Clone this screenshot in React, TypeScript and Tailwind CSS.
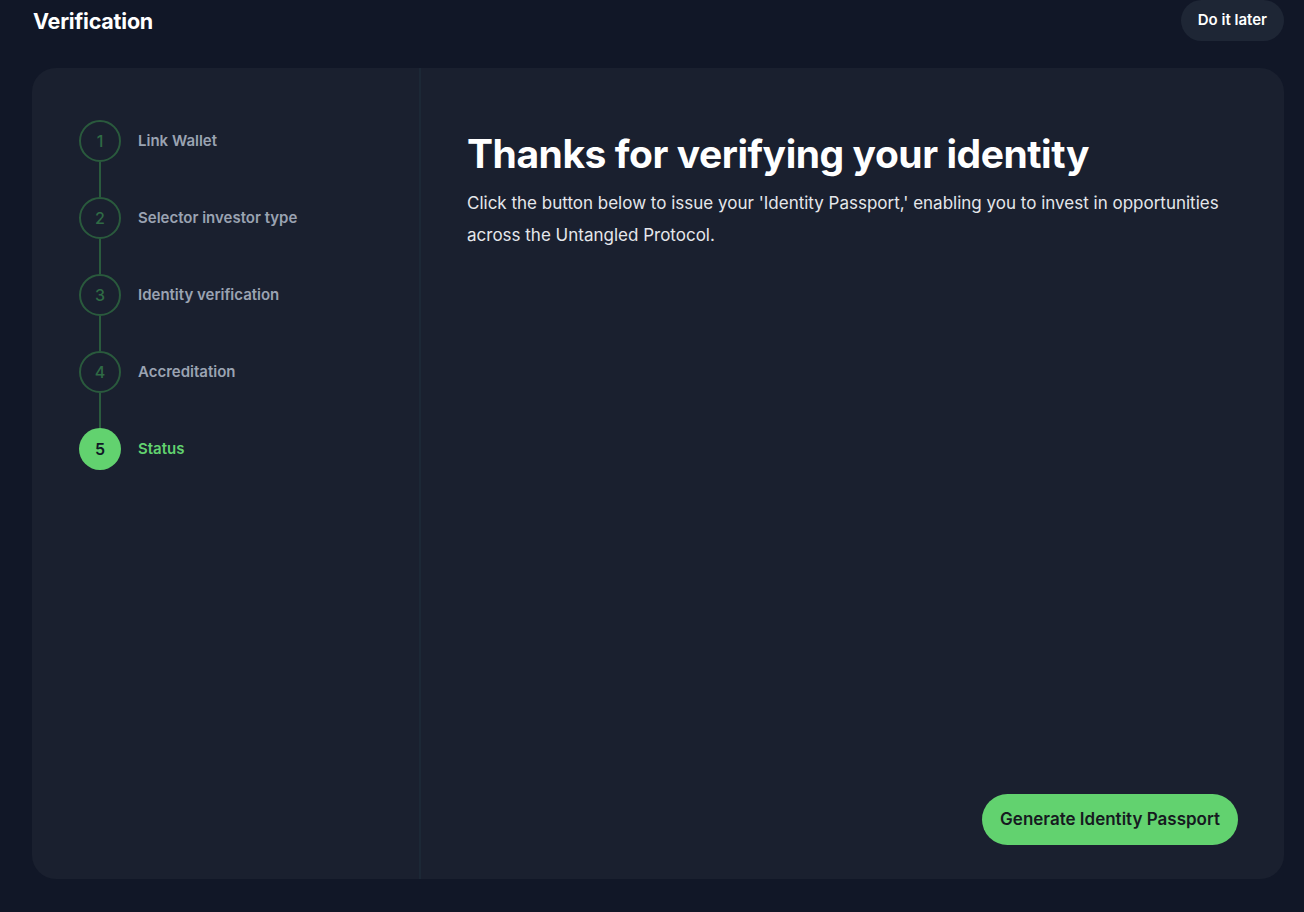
import React from 'react';

interface Step {
  id: number;
  label: string;
}

const steps: Step[] = [
  { id: 1, label: 'Link Wallet' },
  { id: 2, label: 'Selector investor type' },
  { id: 3, label: 'Identity verification' },
  { id: 4, label: 'Accreditation' },
  { id: 5, label: 'Status' },
];

const activeStep = 5;

const App: React.FC = () => {
  return (
    <div
      className="min-h-[912px] bg-[#111727] pl-8 pr-5 pb-[33px]"
      style={{ fontFamily: 'Inter, "Noto Sans", sans-serif' }}
    >
      {/* Header */}
      <div className="flex items-center justify-between h-[43px]">
        <h1 className="text-[21.5px] font-bold text-white tracking-[-0.2px] ml-[1px]">Verification</h1>
        <button className="h-[41px] px-[17px] rounded-full bg-[#1e2635] text-white text-[15px] font-semibold -mt-[2px]">
          Do it later
        </button>
      </div>

      {/* Card */}
      <div className="mt-[25px] h-[811px] flex rounded-[24px] bg-[#1a202f] overflow-hidden">
        {/* Stepper */}
        <div className="w-[389px] border-r-[2px] border-[#1c2836] pl-[47px] pt-[52px]">
          {steps.map((step, i) => {
            const isActive = step.id === activeStep;
            return (
              <div key={step.id}>
                <div className="flex items-center">
                  <div
                    className={`w-[42px] h-[42px] rounded-full flex items-center justify-center text-[16px] ${
                      isActive
                        ? 'bg-[#62d26f] text-[#111827] font-semibold'
                        : 'border-[2px] border-[#2a5a3d] text-[#2f6b45] font-medium'
                    }`}
                  >
                    {step.id}
                  </div>
                  <span
                    className={`ml-[17px] text-[15px] font-semibold ${
                      isActive ? 'text-[#62d26f]' : 'text-[#9aa3b2]'
                    }`}
                  >
                    {step.label}
                  </span>
                </div>
                {i < steps.length - 1 && (
                  <div className="w-[2px] h-[35px] bg-[#2a5a3d] ml-[20px]" />
                )}
              </div>
            );
          })}
        </div>

        {/* Content */}
        <div className="flex-1 flex flex-col pl-[46px] pr-[46px] pt-[60px] pb-[34px]">
          <h2 className="text-[39px] leading-[52px] font-bold text-white tracking-[-0.45px]">
            Thanks for verifying your identity
          </h2>
          <p className="mt-[7px] text-[17px] leading-[32px] text-[#e5e7eb] max-w-[770px]">
            Click the button below to issue your 'Identity Passport,' enabling you to invest in opportunities across the Untangled Protocol.
          </p>
          <div className="mt-auto flex justify-end">
            <button className="h-[51px] px-[18px] rounded-full bg-[#62d26f] text-[#161a1f] text-[17px] font-semibold">
              Generate Identity Passport
            </button>
          </div>
        </div>
      </div>
    </div>
  );
};

export default App;
